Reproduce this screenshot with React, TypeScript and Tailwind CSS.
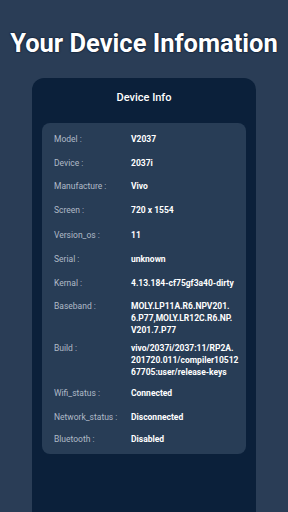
const rows = [
  { label: 'Model :', value: ['V2037'], gap: 'mt-0' },
  { label: 'Device :', value: ['2037i'], gap: 'mt-3' },
  { label: 'Manufacture :', value: ['Vivo'], gap: 'mt-[11px]' },
  { label: 'Screen :', value: ['720 x 1554'], gap: 'mt-3' },
  { label: 'Version_os :', value: ['11'], gap: 'mt-[13px]' },
  { label: 'Serial :', value: ['unknown'], gap: 'mt-3' },
  { label: 'Kernal :', value: ['4.13.184-cf75gf3a40-dirty'], gap: 'mt-3' },
  { label: 'Baseband :', value: ['MOLY.LP11A.R6.NPV201.', '6.P77,MOLY.LR12C.R6.NP.', 'V201.7.P77'], gap: 'mt-[11px]' },
  { label: 'Build :', value: ['vivo/2037i/2037:11/RP2A.', '201720.011/compiler10512', '67705:user/release-keys'], gap: 'mt-[6px]' },
  { label: 'Wifi_status :', value: ['Connected'], gap: 'mt-[9px]' },
  { label: 'Network_status :', value: ['Disconnected'], gap: 'mt-3' },
  { label: 'Bluetooth :', value: ['Disabled'], gap: 'mt-[10px]' },
]

const App = () => {
  return (
    <div className="w-[288px] h-[512px] overflow-hidden bg-[#2a3d56] flex flex-col items-center font-['Roboto',sans-serif]">
      <h1 className="mt-[27px] text-[25.5px] leading-[32px] font-bold text-white [text-shadow:0_0_1px_#05142a,0_0_2px_#05142a]">
        Your Device Infomation
      </h1>
      <div className="mt-[19px] w-[224px] h-[450px] shrink-0 bg-[#0b203a] rounded-[12px] flex flex-col items-center">
        <div className="mt-[13px] text-[11px] leading-[14px] font-medium text-white">Device Info</div>
        <div className="mt-[18px] w-[204px] bg-[#283d56] rounded-[8px] pt-[10px] pb-[9px] pl-3 pr-2 flex flex-col">
          {rows.map((row) => (
            <div key={row.label} className={`flex text-[8.5px] leading-[12px] ${row.gap}`}>
              <div className="w-[77px] shrink-0 text-[#b0bac7]">{row.label}</div>
              <div className="font-bold text-white">
                {row.value.map((line) => (
                  <div key={line}>{line}</div>
                ))}
              </div>
            </div>
          ))}
        </div>
      </div>
    </div>
  )
}

export default App
